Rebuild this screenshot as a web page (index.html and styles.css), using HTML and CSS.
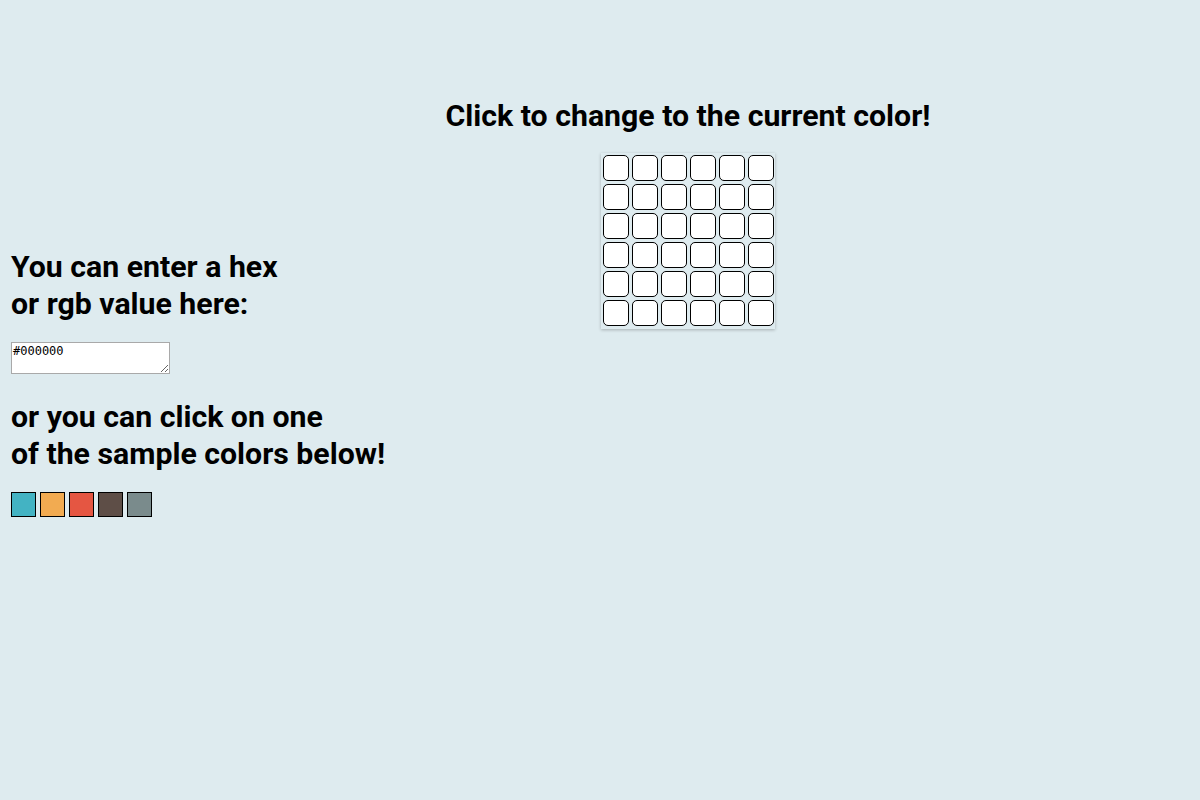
FILE: index.html
```html
<!DOCTYPE html>
<html>
<head>
<meta charset="utf-8">
<link rel="stylesheet" href="styles.css">
</head>
<body>
<div class="page">
  <aside class="controls">
    <h2 class="label">You can enter a hex<br>or rgb value here:</h2>
    <textarea class="color-input">#000000</textarea>
    <h2 class="label">or you can click on one<br>of the sample colors below!</h2>
    <div class="swatches">
      <div class="swatch teal"></div>
      <div class="swatch orange"></div>
      <div class="swatch red"></div>
      <div class="swatch brown"></div>
      <div class="swatch gray"></div>
    </div>
  </aside>
  <main class="canvas-area">
    <h1 class="title">Click to change to the current color!</h1>
    <div class="grid">
      <div class="cell"></div><div class="cell"></div><div class="cell"></div><div class="cell"></div><div class="cell"></div><div class="cell"></div>
      <div class="cell"></div><div class="cell"></div><div class="cell"></div><div class="cell"></div><div class="cell"></div><div class="cell"></div>
      <div class="cell"></div><div class="cell"></div><div class="cell"></div><div class="cell"></div><div class="cell"></div><div class="cell"></div>
      <div class="cell"></div><div class="cell"></div><div class="cell"></div><div class="cell"></div><div class="cell"></div><div class="cell"></div>
      <div class="cell"></div><div class="cell"></div><div class="cell"></div><div class="cell"></div><div class="cell"></div><div class="cell"></div>
      <div class="cell"></div><div class="cell"></div><div class="cell"></div><div class="cell"></div><div class="cell"></div><div class="cell"></div>
    </div>
  </main>
</div>
</body>
</html>
```

FILE: styles.css
```css
html, body {
  margin: 0;
  padding: 0;
  background: #deebef;
  font-family: Roboto, "Liberation Sans", sans-serif;
  color: #000;
}
.page {
  display: flex;
  min-height: 800px;
}
.controls {
  width: 176px;
  flex: none;
  padding: 248px 0 0 11px;
  box-sizing: border-box;
  white-space: nowrap;
}
.label {
  font-size: 30.25px;
  font-weight: 700;
  line-height: 37px;
  margin: 0;
}
.color-input {
  display: block;
  width: 159px;
  height: 32px;
  box-sizing: border-box;
  margin: 20px 0 24px;
  padding: 1px;
  border: 1px solid #a9a9a9;
  font-family: "DejaVu Sans Mono", monospace;
  font-size: 12px;
  line-height: 14px;
  background: #fff;
}
.swatches {
  display: flex;
  gap: 4px;
  margin-top: 20px;
}
.swatch {
  width: 25px;
  height: 25px;
  box-sizing: border-box;
  border: 1px solid #000;
}
.teal { background: #43b3c3; }
.orange { background: #f2ab51; }
.red { background: #e55642; }
.brown { background: #5e4e47; }
.gray { background: #7a8b8c; }
.canvas-area {
  flex: 1;
  display: flex;
  flex-direction: column;
  align-items: center;
  padding-top: 97px;
}
.title {
  font-size: 30.25px;
  font-weight: 700;
  line-height: 37px;
  margin: 0 0 19px;
}
.grid {
  display: grid;
  grid-template-columns: repeat(6, 26px);
  gap: 3px;
  padding: 2px 1px 3px 2px;
  box-shadow: 0 1px 3px rgba(0, 0, 0, 0.25);
}
.cell {
  width: 26px;
  height: 26px;
  box-sizing: border-box;
  border: 1px solid #000;
  border-radius: 5px;
  background: #fff;
}
```
